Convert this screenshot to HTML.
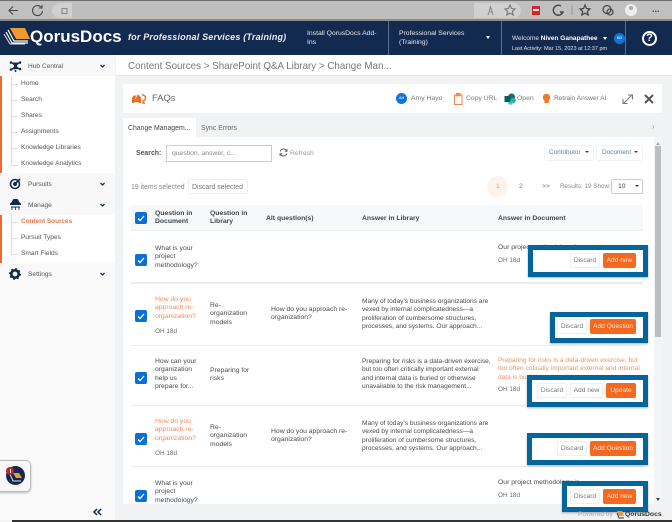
<!DOCTYPE html>
<html lang="en"><head><meta charset="utf-8"><title>FAQs</title>
<style>
*{box-sizing:border-box}
html,body{margin:0;padding:0;background:#f1f2f4}
body{width:672px;height:522px;overflow:hidden;font-family:"Liberation Sans",sans-serif;position:relative;color:#444}
#w{position:absolute;left:0;top:0;width:672px;height:522px;overflow:hidden;background:#f1f2f4;filter:blur(.3px)}
.a,.t{position:absolute}
.t{white-space:nowrap;font-size:6.8px;line-height:8.4px;color:#4a4a4a}
.h{font-weight:bold;color:#3c4650}
.o{color:#ee8a62}
.g{color:#6b6b6b;font-size:6.4px}
.cb{position:absolute;left:135px;width:12px;height:12px;background:#0a6fd6;border-radius:2px}
.cb svg{position:absolute;left:0;top:0}
.sep{position:absolute;left:131px;width:512px;height:1px;background:#e9ebee}
.box{position:absolute;border:5px solid #03659b;background:#fff;box-shadow:0 1px 2px rgba(0,0,0,.3)}
.btn{position:absolute;height:15px;line-height:15px;text-align:center;font-size:6.6px;border-radius:2px}
.w{background:#fff;border:1px solid #eee;color:#777;line-height:13px}
.r{background:#f4691f;color:#fde5d5}
.side{font-size:6.6px;color:#555}
.ln{position:absolute;left:11px;height:1px;width:7px;background:#ddd}
.av{color:#cfe4fa;font-size:3.5px;line-height:11px;text-align:center;font-weight:bold}
</style></head><body><div id="w">

<!-- browser bar -->
<div class="a" style="left:0;top:0;width:672px;height:21px;background:#c0c0c0;border-top:1px solid #6e6e6e;border-bottom:2px solid #8a8a8a"></div>
<div class="a" style="left:52px;top:3px;width:469px;height:15px;background:#d0d0d0;border-radius:8px"></div>
<div class="a" style="left:72px;top:3px;width:402px;height:15px;background:#bdbdbd"></div>
<svg class="a" style="left:0;top:0" width="672" height="21" fill="none" stroke="#444" stroke-width="1.100">
<path d="M18 10.500H9M13 6.500l-4 4 4 4"/>
<path d="M41 7a5 5 0 1 0 1.500 4M42 5v3h-3"/>
<rect x="62" y="8.500" width="5" height="5" stroke="#888"/>
<path d="M488 15l2.500-8 2.500 8M490 12h3" stroke="#888"/>
<path d="M510 5l1.500 3.500 3.500.4-2.600 2.400.8 3.700-3.200-1.900-3.200 1.900.8-3.700L505 9l3.500-.5z" stroke="#777"/>
<path d="M561 6a5 5 0 1 0 2 6h-3" stroke="#444" stroke-width="1.400"/>
<path d="M572 5v10" stroke="#999"/>
<path d="M585 5l1.500 3.500 3.500.4-2.600 2.400.8 3.700-3.200-1.900-3.200 1.900.8-3.700L580 9l3.500-.5z" stroke-width="1.200"/>
<circle cx="607" cy="9.500" r="4" stroke-width="1.200"/><circle cx="610" cy="12" r="3" stroke-width="1.200"/>
</svg>
<div class="a" style="left:532px;top:6px;width:8px;height:9px;background:#d9232c"></div>
<div class="a" style="left:533px;top:9px;width:6px;height:2px;background:#fff"></div>
<div class="a" style="left:625px;top:4px;width:12px;height:12px;border-radius:50%;background:#eee"></div>
<div class="a" style="left:629px;top:6px;width:4px;height:4px;border-radius:50%;background:#aaa"></div>
<div class="t" style="left:652px;top:5px;font-size:9px;color:#444;font-weight:bold">...</div>

<!-- header -->
<div class="a" style="left:0;top:21px;width:672px;height:34px;background:#122950"></div>
<svg class="a" style="left:3px;top:27px" width="27" height="18">
<path d="M3 5l6 11h16" fill="none" stroke="#fff" stroke-width="1.200"/>
<path d="M1 7l6 10h15" fill="none" stroke="#dfe3ea" stroke-width="1"/>
<path d="M5 3l6 11h14" fill="none" stroke="#fff" stroke-width="1.200"/>
<path d="M7 1h15l5 11H13z" fill="#ef9a2e"/>
</svg>
<div class="t" style="left:30px;top:27px;font-size:17px;line-height:20px;font-weight:bold;color:#fff">QorusDocs</div>
<div class="t" style="left:128px;top:31px;font-size:9px;line-height:12px;color:#e8ebf0;font-style:italic;font-weight:bold;letter-spacing:.18px">for Professional Services (Training)</div>
<div class="t" style="left:307px;top:29px;color:#e8ebf0;line-height:9.300px">Install QorusDocs Add-<br>Ins</div>
<div class="a" style="left:388px;top:21px;width:1px;height:34px;background:#5b6f8f"></div>
<div class="t" style="left:399px;top:29px;color:#e8ebf0;line-height:9.300px">Professional Services<br>(Training)</div>
<div class="a" style="left:486px;top:36px;border:2.500px solid transparent;border-top:3px solid #fff"></div>
<div class="a" style="left:501px;top:21px;width:1px;height:34px;background:#5b6f8f"></div>
<div class="t" style="left:512px;top:35px;color:#dfe3ea;font-size:6.500px">Welcome <b style="color:#fff">Niven Ganapathee</b></div>
<div class="a" style="left:603px;top:37px;border:2.500px solid transparent;border-top:3px solid #fff"></div>
<div class="a av" style="left:614px;top:33px;width:11px;height:11px;border-radius:50%;background:#0d76d8">NG</div>
<div class="t" style="left:512px;top:45px;color:#dfe3ea;font-size:5.500px">Last Activity: Mar 15, 2023 at 12:37 pm</div>
<div class="a" style="left:625px;top:21px;width:1px;height:34px;background:#5b6f8f"></div>
<div class="a" style="left:642px;top:31px;width:15px;height:15px;border:2px solid #fff;border-radius:50%;color:#fff;font-size:11px;font-weight:bold;line-height:11px;text-align:center">?</div>

<!-- sidebar -->
<div class="a" style="left:0;top:55px;width:115px;height:467px;background:#fff"></div>
<div class="a" style="left:0;top:55px;width:115px;height:21px;background:#f8f8f8"></div>
<div class="a" style="left:0;top:173px;width:115px;height:21px;background:#f8f8f8"></div>
<div class="a" style="left:0;top:194px;width:115px;height:21px;background:#f8f8f8"></div>
<div class="a" style="left:0;top:263px;width:115px;height:259px;background:#f9f9f9"></div>
<div class="a" style="left:0;top:76px;width:2px;height:97px;background:#f0692c"></div>
<div class="a" style="left:0;top:215px;width:2px;height:48px;background:#f0692c"></div>
<div class="a" style="left:11px;top:76px;width:1px;height:90px;background:#ddd"></div>
<div class="a" style="left:11px;top:215px;width:1px;height:40px;background:#ddd"></div>
<div class="ln" style="top:84px"></div><div class="ln" style="top:100px"></div><div class="ln" style="top:116px"></div><div class="ln" style="top:132px"></div><div class="ln" style="top:148px"></div><div class="ln" style="top:165px"></div><div class="ln" style="top:222px"></div><div class="ln" style="top:238px"></div><div class="ln" style="top:254px"></div>
<svg class="a" style="left:9px;top:60px" width="14" height="12" fill="#15294d"><circle cx="6.500" cy="6" r="1.500"/><circle cx="2" cy="2.500" r="1.300"/><circle cx="11" cy="2.500" r="1.300"/><circle cx="2" cy="9.500" r="1.300"/><circle cx="11" cy="9" r="1.300"/><circle cx="6.500" cy="11" r="1"/><path d="M2 2.500L6.500 6L11 2.500M2 9.500L6.500 6L11 9" stroke="#15294d" stroke-width=".6"/></svg>
<div class="t side" style="left:28px;top:63px">Hub Central</div>
<div class="t side" style="left:21px;top:80px">Home</div>
<div class="t side" style="left:21px;top:96px">Search</div>
<div class="t side" style="left:21px;top:112px">Shares</div>
<div class="t side" style="left:21px;top:128px">Assignments</div>
<div class="t side" style="left:21px;top:144px">Knowledge Libraries</div>
<div class="t side" style="left:21px;top:160px">Knowledge Analytics</div>
<svg class="a" style="left:9px;top:177px" width="13" height="13" fill="none" stroke="#15294d" stroke-width="1.600"><circle cx="6" cy="7" r="4.500"/><circle cx="6" cy="7" r="1.200" fill="#15294d"/><path d="M6 7l5-5"/></svg>
<div class="t side" style="left:28px;top:181px">Pursuits</div>
<svg class="a" style="left:9px;top:199px" width="13" height="12" fill="#15294d"><path d="M1 6a3 3 0 0 1 2-3 3.500 3.500 0 0 1 7 0 3 3 0 0 1 2 3z"/><path d="M2 8h9" stroke="#15294d"/><path d="M3 8v3M6.500 8v3M10 8v3" stroke="#15294d" stroke-width=".8"/></svg>
<div class="t side" style="left:28px;top:202px">Manage</div>
<div class="t" style="left:21px;top:218px;color:#e4764a;font-weight:bold;font-size:6.400px">Content Sources</div>
<div class="t side" style="left:21px;top:234px">Pursuit Types</div>
<div class="t side" style="left:21px;top:250px">Smart Fields</div>
<svg class="a" style="left:9px;top:268px" width="12" height="12"><circle cx="6" cy="6" r="3.700" fill="none" stroke="#15294d" stroke-width="2.600"/><circle cx="6" cy="6" r="5.200" fill="none" stroke="#15294d" stroke-width="1.400" stroke-dasharray="1.800 2.270"/></svg>
<div class="t side" style="left:28px;top:271px">Settings</div>
<svg class="a" style="left:0;top:0" width="115" height="522" fill="none" stroke="#15294d" stroke-width="1.300"><path d="M100.500 65l2 2 2-2M100.500 183l2 2 2-2M100.500 204l2 2 2-2M100.500 273l2 2 2-2"/><path d="M97 509l-3 3 3 3M101 509l-3 3 3 3" stroke-width="1.500"/></svg>

<!-- floating app tile -->
<div class="a" style="left:-4px;top:460px;width:35px;height:32px;background:#f7f7f7;border:1px solid #bbb;border-radius:5px;box-shadow:0 1px 2px rgba(0,0,0,.25)"></div>
<div class="a" style="left:6px;top:466px;width:19px;height:19px;border-radius:50%;background:#122950"></div>
<svg class="a" style="left:8px;top:470px" width="16" height="12"><path d="M2 4l3 7h8" fill="none" stroke="#ddd"/><path d="M5 3h6l3 5H8z" fill="#ef9a2e"/></svg>
<div class="a" style="left:6px;top:467px;width:8px;height:8px;border-radius:50%;background:#b52a25"></div>
<div class="a" style="left:9.500px;top:469px;width:1px;height:3.500px;background:#fff"></div>

<!-- breadcrumb -->
<div class="a" style="left:116px;top:55px;width:556px;height:21px;background:#fff;border-bottom:1px solid #e8e8e8"></div>
<div class="t" style="left:128px;top:60px;font-size:10.400px;line-height:13px;color:#777;transform-origin:left;transform:scaleX(.943)">Content Sources &gt; SharePoint Q&amp;A Library &gt; Change Man...</div>

<!-- FAQ card -->
<div class="a" style="left:123px;top:84px;width:539px;height:29px;background:#fff;border-radius:2px"></div>
<svg class="a" style="left:131px;top:93px" width="15" height="11"><path d="M1 10V6a4.500 4.500 0 0 1 9 0v4H7.500V9h-4v1z" fill="#ee6a22"/><path d="M11 2a3 3 0 0 1 1 6v2h2" fill="none" stroke="#ee6a22" stroke-width="1.400"/></svg>
<div class="t" style="left:134px;top:94px;font-size:6px;color:#fff;font-weight:bold">?</div>
<div class="t" style="left:152px;top:92px;font-size:9.400px;line-height:12px;color:#666">FAQs</div>
<div class="a av" style="left:396px;top:93px;width:11px;height:11px;border-radius:50%;background:#0d76d8">AH</div>
<div class="t" style="left:411px;top:95px;color:#777">Amy Hayo</div>
<svg class="a" style="left:453px;top:93px" width="11" height="12" fill="none" stroke="#ee8a50" stroke-width="1.100"><rect x="1.500" y="2" width="7.500" height="9.500"/><rect x="3.500" y=".6" width="3.500" height="2.200" fill="#ee8a50"/></svg>
<div class="t" style="left:466px;top:95px;color:#777">Copy URL</div>
<svg class="a" style="left:504px;top:93px" width="12" height="12"><circle cx="7.500" cy="4" r="3.500" fill="#0c6f6e"/><circle cx="9" cy="7.500" r="2.800" fill="#35a8a8"/><circle cx="6.500" cy="9.500" r="2.300" fill="#37c6d0"/><rect x=".5" y="3" width="6" height="6" fill="#0b5a5c"/></svg>
<div class="t" style="left:517px;top:95px;color:#777">Open</div>
<svg class="a" style="left:542px;top:93px" width="9" height="12"><path d="M.8 4.500a3.700 3.700 0 1 1 7.400 0c0 1.500-1 2.300-1.500 3.300v2.200H2.500V7.800C2 6.800.8 6 .8 4.500z" fill="#ee7a2b"/></svg>
<div class="t" style="left:554px;top:95px;color:#777;font-size:6.600px">Retrain Answer AI</div>
<svg class="a" style="left:622px;top:93px" width="34" height="12" fill="none" stroke="#777" stroke-width="1.400"><path d="M1.500 10.500l8-8M6 2h4.500v4.500M1 6v4.500h4.500" stroke-width="1.100"/><path d="M23 2l8 8M31 2l-8 8" stroke="#555" stroke-width="2"/></svg>

<!-- tabs -->
<div class="a" style="left:123px;top:118px;width:73px;height:20px;background:#fff"></div>
<div class="t" style="left:128px;top:125px;color:#444;font-size:6.900px">Change Managem...</div>
<div class="t" style="left:201px;top:125px;color:#666;font-size:6.900px">Sync Errors</div>
<div class="t" style="left:652px;top:124px;color:#888;font-size:7px">›</div>

<!-- content -->
<div class="a" style="left:123px;top:137px;width:531px;height:367px;background:#fff"></div>
<div class="a" style="left:654px;top:137px;width:8px;height:367px;background:#f4f4f4"></div>
<div class="a" style="left:655px;top:146px;width:6px;height:191px;background:#bdbdbd"></div>
<div class="a" style="left:656px;top:142px;border:2px solid transparent;border-bottom:3px solid #aaa;margin-top:-2px"></div>
<div class="a" style="left:656px;top:498px;border:2px solid transparent;border-top:3px solid #444"></div>

<div class="t" style="left:136px;top:150px;font-weight:bold;color:#555;font-size:6.900px">Search:</div>
<div class="a" style="left:166px;top:145px;width:106px;height:17px;border:1px solid #ccc;background:#fff"></div>
<div class="t" style="left:172px;top:150px;color:#888">question, answer, c...</div>
<svg class="a" style="left:279px;top:148px" width="9" height="9" fill="none" stroke="#666" stroke-width="1"><path d="M7.700 3A3.500 3.500 0 0 0 1.200 3.500M1.300 6a3.500 3.500 0 0 0 6.500-.5M8 1v2.200H5.800M1 8V5.800h2.200"/></svg>
<div class="t" style="left:290px;top:150px;color:#999">Refresh</div>

<div class="a" style="left:544px;top:145px;width:50px;height:16px;border:1px solid #eef1f5;border-radius:3px"></div>
<div class="t" style="left:549px;top:149px;color:#5a7fa8;font-size:6.400px">Contributor</div>
<div class="a" style="left:585px;top:151px;border:2px solid transparent;border-top:2.500px solid #444"></div>
<div class="a" style="left:596px;top:145px;width:47px;height:16px;border:1px solid #eef1f5;border-radius:3px"></div>
<div class="t" style="left:602px;top:149px;color:#5a7fa8;font-size:6.400px">Document</div>
<div class="a" style="left:634px;top:151px;border:2px solid transparent;border-top:2.500px solid #444"></div>

<div class="t" style="left:131px;top:184px;color:#888;font-size:6.900px">19 items selected</div>
<div class="a" style="left:188px;top:179px;width:60px;height:15px;border:1px solid #eee;border-radius:2px"></div>
<div class="t" style="left:192px;top:184px;color:#777;font-size:6.900px">Discard selected</div>

<div class="a" style="left:487px;top:176px;width:21px;height:21px;border-radius:50%;background:#fdf3ec"></div>
<div class="t" style="left:496px;top:183px;color:#e8955f">1</div>
<div class="t" style="left:519px;top:183px;color:#777">2</div>
<div class="t" style="left:542px;top:183px;color:#777">&gt;&gt;</div>
<div class="t" style="left:560px;top:183px;color:#888;font-size:6.300px">Results: 19 Show:</div>
<div class="a" style="left:611px;top:179px;width:32px;height:15px;border:1px solid #ccc;border-radius:2px"></div>
<div class="t" style="left:618px;top:183px;color:#444">10</div>
<div class="a" style="left:635px;top:185px;border:2px solid transparent;border-top:2.500px solid #333"></div>

<!-- table head -->
<div class="a" style="left:131px;top:205px;width:512px;height:26px;background:#f7f8fa;border-bottom:1px solid #eceef0"></div>
<div class="t h" style="left:155px;top:210px">Question in<br>Document</div>
<div class="t h" style="left:210px;top:210px">Question in<br>Library</div>
<div class="t h" style="left:266px;top:215px">Alt question(s)</div>
<div class="t h" style="left:362px;top:215px">Answer in Library</div>
<div class="t h" style="left:498px;top:215px">Answer in Document</div>

<div class="sep" style="top:282px;height:2px"></div>
<div class="sep" style="top:345px"></div>
<div class="sep" style="top:405px"></div>
<div class="sep" style="top:466px"></div>

<!-- row 1 -->
<div class="t" style="left:155px;top:245px">What is your<br>project<br>methodology?</div>
<div class="t" style="left:498px;top:244px">Our project methodology is...</div>
<div class="t g" style="left:498px;top:257px">OH 18d</div>

<!-- row 2 -->
<div class="t o" style="left:155px;top:296px">How do you<br>approach re-<br>organization?</div>
<div class="t g" style="left:155px;top:328px">OH 18d</div>
<div class="t" style="left:210px;top:302px">Re-<br>organization<br>models</div>
<div class="t" style="left:271px;top:306px">How do you approach re-<br>organization?</div>
<div class="t" style="left:362px;top:298px;font-size:6.600px">Many of today’s business organizations are<br>vexed by internal complicatedness—a<br>proliferation of cumbersome structures,<br>processes, and systems. Our approach...</div>

<!-- row 3 -->
<div class="t" style="left:155px;top:358px">How can your<br>organization<br>help us<br>prepare for...</div>
<div class="t" style="left:210px;top:367px">Preparing for<br>risks</div>
<div class="t" style="left:362px;top:358px;font-size:6.600px">Preparing for risks is a data-driven exercise,<br>but too often critically important external<br>and internal data is buried or otherwise<br>unavailable to the risk management...</div>
<div class="t" style="left:498px;top:357px;color:#ec9460;font-size:6.600px">Preparing for risks is a data-driven exercise, but<br>too often critically important external and internal<br>data is buried or otherwise</div>
<div class="t g" style="left:498px;top:386px">OH 18d</div>

<!-- row 4 -->
<div class="t o" style="left:155px;top:418px">How do you<br>approach re-<br>organization?</div>
<div class="t g" style="left:155px;top:450px">OH 18d</div>
<div class="t" style="left:210px;top:424px">Re-<br>organization<br>models</div>
<div class="t" style="left:271px;top:428px">How do you approach re-<br>organization?</div>
<div class="t" style="left:362px;top:420px;font-size:6.600px">Many of today’s business organizations are<br>vexed by internal complicatedness—a<br>proliferation of cumbersome structures,<br>processes, and systems. Our approach...</div>

<!-- row 5 -->
<div class="t" style="left:155px;top:480px">What is your<br>project<br>methodology?</div>
<div class="t" style="left:498px;top:479px">Our project methodology is...</div>
<div class="t g" style="left:498px;top:492px">OH 18d</div>

<!-- checkboxes -->
<div class="cb" style="top:212px"><svg width="12" height="12" fill="none" stroke="#fff" stroke-width="1.300"><path d="M3 6.500l2 2 4-4.500"/></svg></div>
<div class="cb" style="top:254px"><svg width="12" height="12" fill="none" stroke="#fff" stroke-width="1.300"><path d="M3 6.500l2 2 4-4.500"/></svg></div>
<div class="cb" style="top:310px"><svg width="12" height="12" fill="none" stroke="#fff" stroke-width="1.300"><path d="M3 6.500l2 2 4-4.500"/></svg></div>
<div class="cb" style="top:372px"><svg width="12" height="12" fill="none" stroke="#fff" stroke-width="1.300"><path d="M3 6.500l2 2 4-4.500"/></svg></div>
<div class="cb" style="top:433px"><svg width="12" height="12" fill="none" stroke="#fff" stroke-width="1.300"><path d="M3 6.500l2 2 4-4.500"/></svg></div>
<div class="cb" style="top:490px"><svg width="12" height="12" fill="none" stroke="#fff" stroke-width="1.300"><path d="M3 6.500l2 2 4-4.500"/></svg></div>

<!-- highlight boxes -->
<div class="box" style="left:528px;top:245px;width:120px;height:32px"></div>
<div class="btn w" style="left:570px;top:253px;width:30px">Discard</div>
<div class="btn r" style="left:603px;top:253px;width:33px">Add new</div>

<div class="box" style="left:550px;top:312px;width:98px;height:31px"></div>
<div class="btn w" style="left:557px;top:319px;width:30px">Discard</div>
<div class="btn r" style="left:590px;top:319px;width:46px">Add Question</div>

<div class="box" style="left:527px;top:375px;width:121px;height:32px"></div>
<div class="btn w" style="left:537px;top:383px;width:30px">Discard</div>
<div class="btn w" style="left:570px;top:383px;width:33px">Add new</div>
<div class="btn r" style="left:606px;top:383px;width:30px">Update</div>

<div class="box" style="left:527px;top:433px;width:121px;height:32px"></div>
<div class="btn w" style="left:557px;top:441px;width:30px">Discard</div>
<div class="btn r" style="left:590px;top:441px;width:46px">Add Question</div>

<div class="box" style="left:562px;top:481px;width:86px;height:31px"></div>
<div class="btn w" style="left:570px;top:489px;width:30px">Discard</div>
<div class="btn r" style="left:603px;top:489px;width:33px">Add new</div>

<!-- footer -->
<div class="t" style="left:578px;top:511px;color:#aaa;font-size:6.600px">Powered by</div>
<svg class="a" style="left:616px;top:510px" width="9" height="9"><path d="M1 1h5l2 5H3z" fill="#ef9a2e"/><path d="M1 3l2 5h5" fill="none" stroke="#333"/></svg>
<div class="t" style="left:625px;top:511px;color:#333;font-size:6.800px;font-weight:bold">QorusDocs</div>
<div class="a" style="left:0;top:520px;width:672px;height:2px;background:#333"></div>
<div class="a" style="left:0;top:520px;width:12px;height:2px;background:#f4f4f4"></div>
</div></body></html>
